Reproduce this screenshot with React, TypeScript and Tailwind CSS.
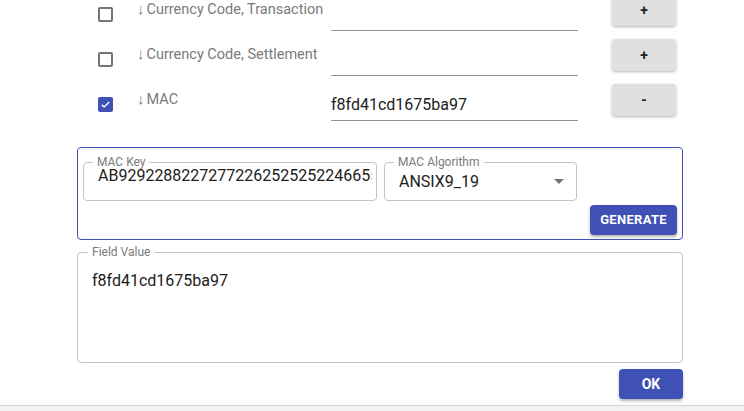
import React from 'react';

const rows = [
  { label: 'Currency Code, Transaction', value: '', checked: false, action: '+' },
  { label: 'Currency Code, Settlement', value: '', checked: false, action: '+' },
  { label: 'MAC', value: 'f8fd41cd1675ba97', checked: true, action: '-' },
];

const font = { fontFamily: 'Roboto, "Liberation Sans", sans-serif' };

function Checkbox({ checked }: { checked: boolean }) {
  if (checked) {
    return (
      <div className="mt-[13px] w-[15px] h-[15px] rounded-[2px] bg-[#3f51b5] flex items-center justify-center">
        <svg width="11" height="11" viewBox="0 0 24 24">
          <path d="M4 12.5l5 5L20 6.5" fill="none" stroke="white" strokeWidth="3" />
        </svg>
      </div>
    );
  }
  return <div className="mt-[13px] w-[15px] h-[15px] rounded-[2px] border-2 border-[#757575]" />;
}

export default function App() {
  return (
    <div className="w-[744px] h-[411px] bg-white overflow-hidden flex flex-col" style={font}>
      {/* field rows, scrolled slightly */}
      <div className="-mt-[6px]">
        {rows.map((r) => (
          <div key={r.label} className="h-[45px] flex items-start pl-[98px]">
            <Checkbox checked={r.checked} />
            <div className="ml-[24px] w-[194px] mt-[6px] text-[14.5px] leading-[18px] text-[#7a7a7a]">
              <span className="text-[15px] mr-[2px]">↓</span>
              {r.label}
            </div>
            <div className="w-[247px] h-[37px] border-b border-[#949494] pt-[11px] text-[16px] leading-[19px] text-[#212121]">
              {r.value}
            </div>
            <button className="ml-[34px] w-[64px] h-[32px] rounded-[4px] bg-[#e0e0e0] text-[14px] font-bold text-[#212121] shadow-[0_1px_3px_rgba(0,0,0,0.3)]">
              {r.action}
            </button>
          </div>
        ))}
      </div>

      {/* MAC settings */}
      <div className="mt-[18px] ml-[77px] w-[606px] border border-[#3f51b5] rounded-[4px] px-[5px] pt-[14px] pb-[4px]">
        <div className="flex gap-[7px]">
          <div className="relative w-[294px] h-[39px] border border-[#c4c4c4] rounded-[4px] pl-[14px] pr-[4px] pt-[4px]">
            <span className="absolute left-[9px] -top-[7px] px-[4px] bg-white text-[12px] leading-[12px] text-[#7a7a7a]">
              MAC Key
            </span>
            <div className="relative z-10 overflow-hidden whitespace-nowrap text-[16px] leading-[18px] text-[#212121]">
              AB92922882272772262525252246655889900AABB
            </div>
          </div>
          <div className="relative w-[193px] h-[39px] border border-[#c4c4c4] rounded-[4px] pl-[14px] pr-[12px] flex items-center justify-between">
            <span className="absolute left-[9px] -top-[7px] px-[4px] bg-white text-[12px] leading-[12px] text-[#7a7a7a]">
              MAC Algorithm
            </span>
            <span className="text-[16px] leading-[19px] text-[#212121]">ANSIX9_19</span>
            <svg width="10" height="5" viewBox="0 0 10 5">
              <path d="M0 0l5 5 5-5z" fill="#757575" />
            </svg>
          </div>
        </div>
        <div className="flex justify-end mt-[4px]">
          <button className="w-[87px] h-[30px] rounded-[4px] bg-[#3f51b5] text-white text-[13px] font-bold tracking-[0.3px] shadow-[0_2px_3px_rgba(0,0,0,0.3)]">
            GENERATE
          </button>
        </div>
      </div>

      {/* field value */}
      <div className="relative mt-[12px] ml-[77px] w-[606px] h-[111px] border border-[#c4c4c4] rounded-[4px] pl-[14px] pt-[18px]">
        <span className="absolute left-[10px] -top-[7px] px-[4px] bg-white text-[12px] leading-[12px] text-[#7a7a7a]">
          Field Value
        </span>
        <div className="text-[16px] leading-[19px] text-[#212121]">f8fd41cd1675ba97</div>
      </div>

      <div className="flex justify-end mt-[6px] ml-[77px] w-[606px]">
        <button className="w-[64px] h-[30px] rounded-[4px] bg-[#3f51b5] text-white text-[14px] font-bold shadow-[0_2px_3px_rgba(0,0,0,0.3)]">
          OK
        </button>
      </div>

      <div className="mt-auto h-[6px] bg-[#f2f2f2] border-t border-[#d6d6d6]" />
    </div>
  );
}
